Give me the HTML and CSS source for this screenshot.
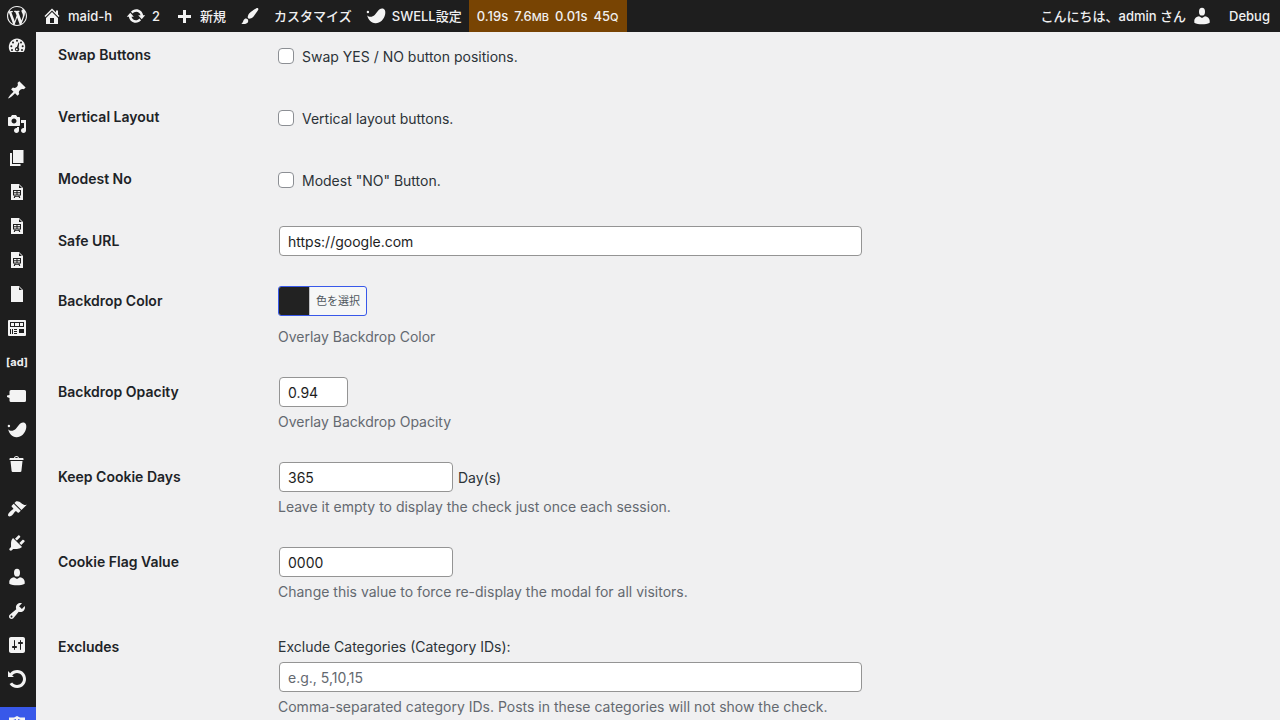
FILE: index.html
```html
<!DOCTYPE html>
<html lang="ja">
<head>
    <meta charset="UTF-8" />
    <meta name="viewport" content="width=device-width, initial-scale=1.0"/>
    <title>Settings</title>
    <link rel="stylesheet" href="styles.css">
</head>
<body>
    <!-- Shapes used more than once -->
    <svg class="sprite" aria-hidden="true">
        <symbol id="icon-user" viewBox="0 0 20 20">
            <ellipse cx="10" cy="5.700" rx="3" ry="3.900"/>
            <path d="M7 10.300L10 12l3-1.700c2.600.1 4.700 2.300 4.700 4.500v2c-2 1.100-4.800 1.500-7.700 1.500s-5.700-.4-7.700-1.500v-2c0-2.200 2.100-4.400 4.700-4.500z"/>
        </symbol>
        <symbol id="icon-swell" viewBox="0 0 20 20">
            <circle cx="1.900" cy="6" r="1.200"/>
            <path d="M1.200 9.200C3 11.400 6.200 11.300 8.700 9C11 6.800 12.500 3 16 2.600C18.600 2.500 19.800 5 19.200 8C18.200 13.500 14 17.300 9.500 17.200C5 17 2 13.500 1.200 9.200z"/>
        </symbol>
        <symbol id="icon-slide" viewBox="0 0 20 20">
            <path fill-rule="evenodd" d="M12 2l4 4v12H4V2h8zm0 4h3l-3-3v3z"/>
            <g class="cut"><path fill-rule="evenodd" d="M6 8h8v5.500H6zM7 9v1.300h2.500V9zM10.500 9v1.300H13V9zM7 11.300v1.200h2.500v-1.200zM10.500 11.300v1.200H13v-1.200z"/><path d="M7.500 13.500h1.200L7.900 16H6.700zM11.300 13.500h1.200l.8 2.500h-1.200zM8 14.300h4v.8H8z"/></g>
        </symbol>
    </svg>

    <!-- Top toolbar -->
    <header class="adminbar">
        <nav class="bar-group">
            <a href="#" class="bar-item bar-logo" aria-label="WordPress">
                <svg class="icon" viewBox="0 0 20 20"><path d="M20 10c0-5.510-4.490-10-10-10C4.480 0 0 4.490 0 10c0 5.520 4.480 10 10 10 5.510 0 10-4.480 10-10zM7.780 15.370L4.370 6.220c.55-.02 1.170-.08 1.170-.08.5-.06.44-1.130-.06-1.110 0 0-1.450.11-2.370.11-.18 0-.37 0-.58-.01C4.120 2.690 6.870 1.110 10 1.110c2.330 0 4.450.87 6.050 2.340-.68-.11-1.650.39-1.650 1.580 0 .74.45 1.360.9 2.100.35.61.55 1.360.55 2.460 0 1.490-1.400 5-1.400 5l-3.030-8.370c.54-.02.82-.17.82-.17.5-.05.44-1.250-.06-1.220 0 0-1.440.12-2.380.12-.87 0-2.330-.12-2.330-.12-.5-.03-.56 1.200-.06 1.220l.92.08 1.260 3.410zM17.410 10c.24-.64.74-1.870.43-4.250.7 1.290 1.050 2.710 1.050 4.250 0 3.290-1.730 6.240-4.400 7.780.97-2.590 1.940-5.200 2.920-7.780zM6.100 18.090C3.120 16.650 1.110 13.530 1.110 10c0-1.300.23-2.480.72-3.590C3.250 10.300 4.670 14.200 6.100 18.090zM10.130 11.460l2.580 6.980c-.86.29-1.760.45-2.710.45-.79 0-1.570-.11-2.290-.33.81-2.380 1.620-4.740 2.420-7.100z"/></svg>
            </a>
            <a href="#" class="bar-item">
                <svg class="icon" viewBox="0 0 20 20"><path d="M16 8.500l1.530 1.530-1.060 1.060L10 4.600l-6.470 6.490-1.060-1.060L10 2.500l4 4v-2h2v4zm-6-2.460l6 5.990V18H4v-5.970zM12 17v-5H8v5h4z"/></svg>
                <span>maid-h</span>
            </a>
            <a href="#" class="bar-item">
                <svg class="icon" viewBox="0 0 20 20"><path d="M10.200 3.280c3.530 0 6.430 2.610 6.920 6h2.080l-3.500 4-3.500-4h2.320c-.45-1.970-2.210-3.450-4.320-3.450-1.450 0-2.730.71-3.540 1.780L4.950 5.660C6.230 4.200 8.110 3.280 10.200 3.280zm-.4 13.440c-3.520 0-6.430-2.610-6.920-6H.8l3.500-4c1.170 1.330 2.330 2.670 3.500 4H5.480c.45 1.970 2.210 3.450 4.320 3.450 1.450 0 2.730-.71 3.540-1.780l1.710 1.950c-1.280 1.460-3.150 2.380-5.250 2.380z"/></svg>
                <span>2</span>
            </a>
            <a href="#" class="bar-item">
                <svg class="icon" viewBox="0 0 20 20"><path d="M17 9v3h-5v5H9v-5H4V9h5V4h3v5h5z"/></svg>
                <span>新規</span>
            </a>
            <a href="#" class="bar-item bar-item-wide">
                <svg class="icon" viewBox="0 0 20 20"><path d="M18.330 3.570s.27-.8-.31-1.360c-.53-.52-1.220-.24-1.220-.24-.61.3-5.760 3.470-7.670 5.570-.86.96-2.060 3.790-1.090 4.820.92.98 3.960-.17 4.790-1 2.060-2.060 5.210-7.170 5.500-7.790zM1.400 17.650c2.370-1.560 1.460-3.410 3.230-4.640.93-.65 2.220-.62 3.080.29.63.67.8 2.570-.16 3.460-1.570 1.450-4 1.550-6.150.89z"/></svg>
                <span>カスタマイズ</span>
            </a>
            <a href="#" class="bar-item">
                <svg class="icon"><use href="#icon-swell"/></svg>
                <span>SWELL設定</span>
            </a>
            <a href="#" class="bar-item bar-stats">
                <span>0.19s</span>
                <span>7.6<small>MB</small></span>
                <span>0.01s</span>
                <span>45<small>Q</small></span>
            </a>
        </nav>
        <nav class="bar-group">
            <a href="#" class="bar-item">
                <span>こんにちは、admin さん</span>
                <svg class="icon"><use href="#icon-user"/></svg>
            </a>
            <a href="#" class="bar-item bar-debug"><span>Debug</span></a>
        </nav>
    </header>

    <!-- Collapsed admin menu -->
    <nav class="sidebar">
        <ul class="menu">
            <li><a href="#" aria-label="Dashboard"><svg class="icon" viewBox="0 0 20 20">
                <path d="M3.500 17h13c1-1.400 1.700-3.100 1.700-5 0-4.700-3.700-8.500-8.200-8.500S1.800 7.300 1.800 12c0 1.900.7 3.600 1.700 5z"/>
                <g class="cut"><circle cx="10" cy="5.800" r="1"/><circle cx="6" cy="7.500" r="1"/><circle cx="14" cy="7.500" r="1"/><circle cx="4.300" cy="11.300" r="1"/><circle cx="15.700" cy="11.300" r="1"/><circle cx="5" cy="15" r="1"/><circle cx="15" cy="15" r="1"/><path fill-rule="evenodd" d="M11.500 7.500l.8.200-.7 5a2.200 2.200 0 1 1-1.700-.6zM9.700 13.400a.9.900 0 1 0 .1 1.800.9.900 0 0 0-.1-1.800z"/></g>
            </svg></a></li>
            <li class="separator"></li>
            <li><a href="#" aria-label="Posts"><svg class="icon" viewBox="0 0 20 20"><path d="M10.440 3.020l1.820-1.820 6.360 6.350-1.830 1.820c-1.050-.68-2.480-.57-3.410.36l-.75.75c-.92.93-1.040 2.350-.35 3.410l-1.830 1.820-2.410-2.410-2.800 2.790c-.42.42-3.380 2.710-3.800 2.290s1.860-3.390 2.280-3.810l2.790-2.790L4.100 9.360l1.830-1.820c1.050.69 2.480.57 3.400-.36l.75-.75c.93-.92 1.050-2.350.36-3.410z"/></svg></a></li>
            <li><a href="#" aria-label="Media"><svg class="icon" viewBox="0 0 20 20"><path d="M13 11V4c0-.55-.45-1-1-1h-1.670L9 1H5L3.670 3H2c-.55 0-1 .45-1 1v7c0 .55.45 1 1 1h10c.55 0 1-.45 1-1zM7 4.500c1.380 0 2.500 1.120 2.500 2.500S8.380 9.500 7 9.500 4.500 8.380 4.500 7 5.620 4.500 7 4.500zM14 6h5v10.500c0 1.380-1.120 2.500-2.500 2.500S14 17.880 14 16.500s1.120-2.500 2.500-2.500c.17 0 .34.02.5.05V9h-3V6zm-4 8.050V13h2v3.500c0 1.380-1.120 2.500-2.500 2.500S7 17.880 7 16.500 8.120 14 9.500 14c.17 0 .34.02.5.05z"/></svg></a></li>
            <li><a href="#" aria-label="Pages"><svg class="icon" viewBox="0 0 20 20"><path d="M6 15V2h10.500v13H6zm-1 1h8.500v2H3V5h2v11z"/></svg></a></li>
            <li><a href="#" aria-label="Slides"><svg class="icon"><use href="#icon-slide"/></svg></a></li>
            <li><a href="#" aria-label="Slides"><svg class="icon"><use href="#icon-slide"/></svg></a></li>
            <li><a href="#" aria-label="Slides"><svg class="icon"><use href="#icon-slide"/></svg></a></li>
            <li><a href="#" aria-label="Documents"><svg class="icon" viewBox="0 0 20 20"><path fill-rule="evenodd" d="M12 2l4 4v12H4V2h8zm0 4h3l-3-3v3z"/></svg></a></li>
            <li><a href="#" aria-label="Blocks"><svg class="icon" viewBox="0 0 20 20">
                <rect x="1" y="2" width="18" height="16" rx="1"/>
                <g class="cut"><path d="M3 4h14v5H3zM12 11h5v4h-5zM3 11h1v5H3zM5 11h1v5H5zM7 11h3v1H7zM7 13h3v1H7zM7 15h3v1H7z"/></g>
                <path d="M4 5h3v3H4zM8 5h4v3H8zM13 5h3v3h-3z"/>
            </svg></a></li>
            <li><a href="#" class="menu-ad">[ad]</a></li>
            <li><a href="#" aria-label="Balloons"><svg class="icon" viewBox="0 0 20 20"><path d="M4 4h13.500a1.500 1.500 0 0 1 1.500 1.500v9a1.500 1.500 0 0 1-1.500 1.500H4a1.500 1.500 0 0 1-1.500-1.500V12L0 11V9.500l2.500-.5V5.500A1.500 1.500 0 0 1 4 4z"/></svg></a></li>
            <li><a href="#" aria-label="SWELL"><svg class="icon"><use href="#icon-swell"/></svg></a></li>
            <li><a href="#" aria-label="Trash"><svg class="icon" viewBox="0 0 20 20"><path d="M12 4h3.500c.6 0 1 .4 1 1v1h-14V5c0-.6.5-1 1-1H7c.2-1.100 1.300-2 2.500-2s2.300.9 2.500 2zM8 4h3c-.2-.6-.9-1-1.500-1S8.200 3.400 8 4zM3.500 7h12l-1.100 10.100c0 .5-.5.9-1 .9H5.600c-.5 0-.9-.4-1-.9z"/></svg></a></li>
            <li class="separator"></li>
            <li><a href="#" aria-label="Appearance"><svg class="icon" viewBox="0 0 20 20"><path d="M14.480 11.060L7.410 3.990l1.500-1.500c.5-.56 2.300-.47 3.510.32 1.210.8 1.430 1.280 2.910 2.100 1.180.64 2.450 1.260 4.450.85zm-.71.71L6.700 4.700 4.930 6.470c-.39.39-.39 1.020 0 1.410l1.060 1.060c.39.39.39 1.030 0 1.420-.6.6-1.430 1.110-2.210 1.690-.35.26-.7.53-1.010.84C1.430 14.230.4 16.080 1.400 17.070c.99 1 2.840-.03 4.180-1.360.31-.31.58-.66.85-1.020.57-.78 1.080-1.610 1.690-2.210.39-.39 1.020-.39 1.410 0l1.060 1.060c.39.39 1.020.39 1.410 0z"/></svg></a></li>
            <li><a href="#" aria-label="Plugins"><svg class="icon" viewBox="0 0 20 20"><path d="M13.110 4.360L9.870 7.600 8 5.730l3.240-3.240c.35-.34 1.050-.2 1.560.32.52.51.66 1.210.31 1.550zm-8 1.770l.91-1.120 9.010 9.010-1.190.84c-.71.71-2.630 1.160-3.820 1.160H6.140L4.900 17.260c-.59.59-1.540.59-2.120 0-.59-.58-.59-1.530 0-2.120l1.240-1.240v-3.880c0-1.130.4-3.190 1.090-3.890zm7.260 3.970l3.240-3.240c.34-.35 1.040-.21 1.550.31.52.51.66 1.210.31 1.550l-3.240 3.250z"/></svg></a></li>
            <li><a href="#" aria-label="Users"><svg class="icon"><use href="#icon-user"/></svg></a></li>
            <li><a href="#" aria-label="Tools"><svg class="icon" viewBox="0 0 20 20"><path d="M16.680 9.770c-1.340 1.340-3.300 1.670-4.950.99l-5.410 6.520c-.99.99-2.590.99-3.580 0s-.99-2.590 0-3.570l6.520-5.420c-.68-1.650-.35-3.610.99-4.950 1.280-1.280 3.120-1.620 4.720-1.060l-2.890 2.890 2.820 2.820 2.860-2.870c.53 1.580.18 3.390-1.080 4.650zM3.810 16.210c.4.39 1.040.39 1.430 0 .4-.4.4-1.040 0-1.430-.39-.4-1.030-.4-1.430 0-.39.39-.39 1.030 0 1.430z"/></svg></a></li>
            <li><a href="#" aria-label="Settings"><svg class="icon" viewBox="0 0 20 20"><path d="M18 16V4c0-1.100-.9-2-2-2H4c-1.100 0-2 .9-2 2v12c0 1.100.9 2 2 2h12c1.100 0 2-.9 2-2zM8 11h1c.55 0 1 .45 1 1s-.45 1-1 1H8v1.500c0 .28-.22.5-.5.5s-.5-.22-.5-.5V13H6c-.55 0-1-.45-1-1s.45-1 1-1h1V5.500c0-.28.22-.5.5-.5s.5.22.5.5V11zm5-2h-1c-.55 0-1-.45-1-1s.45-1 1-1h1V5.500c0-.28.22-.5.5-.5s.5.22.5.5V7h1c.55 0 1 .45 1 1s-.45 1-1 1h-1v5.500c0 .28-.22.5-.5.5s-.5-.22-.5-.5V9z"/></svg></a></li>
            <li><a href="#" aria-label="Backup"><svg class="icon" viewBox="0 0 20 20"><path d="M10.250 1.020c5.100 0 8.750 4.040 8.750 9s-3.650 9-8.750 9c-3.200 0-6.020-1.590-7.680-3.990l2.590-1.520c1.100 1.500 2.860 2.510 4.840 2.510 3.300 0 6-2.790 6-6s-2.700-6-6-6c-1.970 0-3.720 1-4.820 2.490L7 8.020H1V2l2.200 2.240c1.660-2 4.200-3.220 7.050-3.220z"/></svg></a></li>
            <li class="separator"></li>
            <li><a href="#" class="current" aria-label="Age check"><svg class="icon" viewBox="0 0 20 20"><path fill-rule="evenodd" d="M10 2l3 1.500h5V9c0 5-4 8-8 10-4-2-8-5-8-10V3.500h5zM9 5l-4 1.500v3h4zM11 5v4.500h4v-3z"/></svg></a></li>
        </ul>
    </nav>

    <!-- Settings form -->
    <main class="content">
        <form>
            <table class="form-table">
                <tr>
                    <th scope="row">Swap Buttons</th>
                    <td><label class="check"><input type="checkbox" name="swap"> Swap YES / NO button positions.</label></td>
                </tr>
                <tr>
                    <th scope="row">Vertical Layout</th>
                    <td><label class="check"><input type="checkbox" name="vertical"> Vertical layout buttons.</label></td>
                </tr>
                <tr>
                    <th scope="row">Modest No</th>
                    <td><label class="check"><input type="checkbox" name="modest"> Modest "NO" Button.</label></td>
                </tr>
                <tr>
                    <th scope="row"><label for="safeUrl">Safe URL</label></th>
                    <td><input type="text" id="safeUrl" class="field field-wide" value="https://google.com"></td>
                </tr>
                <tr>
                    <th scope="row">Backdrop Color</th>
                    <td>
                        <button type="button" class="color-button"><span class="swatch"></span><span class="color-text">色を選択</span></button>
                        <p class="description description-spaced">Overlay Backdrop Color</p>
                    </td>
                </tr>
                <tr>
                    <th scope="row"><label for="opacity">Backdrop Opacity</label></th>
                    <td>
                        <input type="text" id="opacity" class="field field-small" value="0.94">
                        <p class="description">Overlay Backdrop Opacity</p>
                    </td>
                </tr>
                <tr>
                    <th scope="row"><label for="days">Keep Cookie Days</label></th>
                    <td>
                        <div class="field-row"><input type="text" id="days" class="field" value="365"> <span>Day(s)</span></div>
                        <p class="description">Leave it empty to display the check just once each session.</p>
                    </td>
                </tr>
                <tr>
                    <th scope="row"><label for="flag">Cookie Flag Value</label></th>
                    <td>
                        <input type="text" id="flag" class="field" value="0000">
                        <p class="description">Change this value to force re-display the modal for all visitors.</p>
                    </td>
                </tr>
                <tr>
                    <th scope="row">Excludes</th>
                    <td>
                        <label for="excludes" class="field-label">Exclude Categories (Category IDs):</label>
                        <input type="text" id="excludes" class="field field-wide" placeholder="e.g., 5,10,15">
                        <p class="description">Comma-separated category IDs. Posts in these categories will not show the check.</p>
                    </td>
                </tr>
            </table>
        </form>
    </main>
</body>
</html>
```
FILE: styles.css
```css
* {
    box-sizing: border-box;
    margin: 0;
    padding: 0;
}

body {
    font-family: Inter, "Noto Sans CJK JP", sans-serif;
    font-size: 14px;
    line-height: 21px;
    color: #2c3338;
    background: #f0f0f1;
    height: 100vh;
    overflow: hidden;
}

a {
    color: inherit;
    text-decoration: none;
}

.sprite {
    display: none;
}

.icon {
    width: 20px;
    height: 20px;
    flex: none;
    display: block;
    fill: #f3f3f3;
}

.cut {
    fill: #1e1e1e;
}

.adminbar {
    position: fixed;
    top: 0;
    left: 0;
    right: 0;
    z-index: 2;
    height: 32px;
    display: flex;
    justify-content: space-between;
    background: #1e1e1e;
    color: #f0f0f1;
    font-size: 13px;
    font-weight: 500;
    white-space: nowrap;
}

.bar-group {
    display: flex;
}

.bar-item {
    display: flex;
    align-items: center;
    gap: 6px;
    padding: 0 7px;
}

.bar-logo {
    padding-right: 8px;
}

.bar-item-wide {
    gap: 14px;
}

.bar-stats {
    gap: 6px;
    padding: 0 8px;
    background: #784403;
}

.bar-stats small {
    font-size: 11px;
    line-height: 1;
}

.bar-debug {
    padding: 0 10px;
}

/* Collapsed menu */
.sidebar {
    position: fixed;
    top: 0;
    bottom: 0;
    left: 0;
    width: 36px;
    padding-top: 28px;
    overflow: hidden;
    background: #1e1e1e;
    color: #f0f0f1;
}

.menu {
    list-style: none;
}

.menu a {
    height: 34px;
    padding-right: 2px;
    display: flex;
    align-items: center;
    justify-content: center;
}

.menu .separator {
    height: 11px;
}

.menu .menu-ad {
    font-size: 11px;
    font-weight: 700;
}

.menu .current {
    background: #3858e9;
}

/* Settings form */
.content {
    margin-left: 36px;
    padding: 25px 20px 0 22px;
}

.form-table {
    width: 100%;
    border-collapse: collapse;
}

.form-table th {
    width: 210px;
    padding: 20px 10px 20px 0;
    text-align: left;
    vertical-align: top;
    font-weight: 600;
    line-height: 20px;
    color: #1d2327;
}

.form-table td {
    padding: 15px 10px;
    vertical-align: top;
}

.check {
    display: flex;
    align-items: center;
    gap: 8px;
    height: 32px;
}

.check input {
    appearance: none;
    width: 16px;
    height: 16px;
    border: 1px solid #8c8f94;
    border-radius: 4px;
    background: #fff;
}

.field {
    display: block;
    width: 174px;
    height: 30px;
    margin: 0 1px;
    padding: 0 8px;
    border: 1px solid #949494;
    border-radius: 4px;
    background: #fff;
    color: #1e1e1e;
    font: inherit;
}

.field::placeholder {
    color: #646970;
}

.field-small {
    width: 69px;
}

.field-wide {
    width: 583px;
    max-width: 100%;
}

.field-row {
    display: flex;
    align-items: center;
    gap: 4px;
}

.field-label {
    display: flex;
    align-items: center;
    height: 30px;
    padding-bottom: 2px;
}

.description {
    margin-top: 4px;
    color: #646970;
}

.description-spaced {
    margin-top: 10px;
}

.color-button {
    display: flex;
    height: 30px;
    overflow: hidden;
    border: 1px solid #3858e9;
    border-radius: 3px;
    background: #f6f7f7;
    color: #50575e;
    font-family: inherit;
    font-size: 11px;
    line-height: 28px;
}

.swatch {
    width: 30px;
    background: #222;
}

.color-text {
    padding: 0 6px;
    border-left: 1px solid #c3c4c7;
}
```
